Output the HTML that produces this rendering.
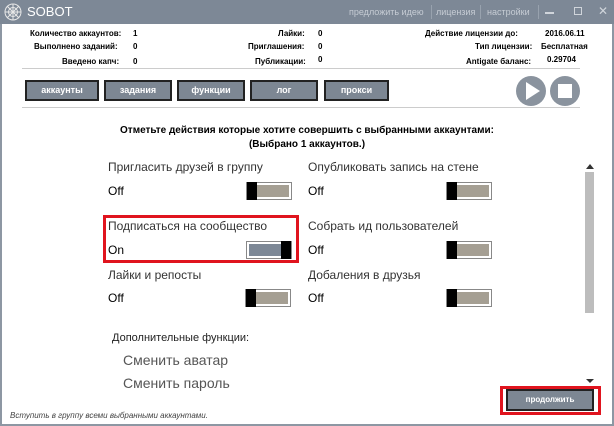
<!DOCTYPE html>
<html><head><meta charset="utf-8"><style>
*{margin:0;padding:0;box-sizing:border-box}
body{width:614px;height:426px;position:relative;background:#fff;font-family:"Liberation Sans","DejaVu Sans",sans-serif;overflow:hidden;color:#000}
.a{position:absolute;white-space:nowrap}
.s{font-size:8px;font-weight:bold}
.t{position:absolute;top:7px;color:#c6ccd4;font-size:9px;white-space:nowrap}
.sep{position:absolute;top:5px;width:1px;height:14px;background:#98a2ae}
.btn{position:absolute;top:80px;height:21px;background:#7d8793;border:2px solid #222;color:#fff;font-size:9px;font-weight:bold;text-align:center;line-height:17px}
.lbl{font-size:12px;color:#333}
.tg{position:absolute;width:46px;height:18px;background:#fff;border:1px solid #888}
.tg i{position:absolute;left:2px;top:2px;right:2px;bottom:2px;background:#a59f93}
.tg b{position:absolute;left:0;top:-1px;width:10px;height:18px;background:#000}
</style></head><body>
<div class="a" style="left:0;top:0;width:614px;height:426px;border:2px solid #8d97a3;border-top:none"></div>
<div class="a" style="left:0;top:0;width:614px;height:24px;background:#7d8896"></div>
<svg class="a" style="left:3px;top:2px" width="20" height="20" viewBox="0 0 20 20" fill="none" stroke="#e8e8e8" stroke-width="1"><circle cx="10" cy="10" r="8"/><circle cx="10" cy="10" r="4.5"/><path d="M2 10H18M10 2V18M4 4L16 16M16 4L4 16"/></svg>
<div class="a" style="left:27px;top:4px;color:#fff;font-size:13px">SOBOT</div>
<div class="t" style="left:349px">предложить идею</div>
<div class="sep" style="left:431px"></div>
<div class="t" style="left:436px">лицензия</div>
<div class="sep" style="left:480px"></div>
<div class="t" style="left:487px">настройки</div>
<div class="sep" style="left:538px"></div>
<div class="a" style="left:545px;top:12px;width:9px;height:2px;background:#d0d5db"></div>
<div class="a" style="left:574px;top:7px;width:8px;height:8px;border:1px solid #d0d5db"></div>
<div class="a" style="left:598px;top:4px;color:#d0d5db;font-size:12px">✕</div>

<div class="a s" style="left:30px;top:29px">Количество аккаунтов:</div><div class="a s" style="left:133px;top:29px">1</div>
<div class="a s" style="left:34px;top:42px">Выполнено заданий:</div><div class="a s" style="left:133px;top:42px">0</div>
<div class="a s" style="left:62px;top:57px">Введено капч:</div><div class="a s" style="left:133px;top:57px">0</div>
<div class="a s" style="left:278px;top:29px">Лайки:</div><div class="a s" style="left:318px;top:29px">0</div>
<div class="a s" style="left:248px;top:42px">Приглашения:</div><div class="a s" style="left:318px;top:42px">0</div>
<div class="a s" style="left:255px;top:57px">Публикации:</div><div class="a s" style="left:318px;top:55px">0</div>
<div class="a s" style="left:425px;top:29px">Действие лицензии до:</div><div class="a s" style="left:545px;top:29px">2016.06.11</div>
<div class="a s" style="left:475px;top:42px">Тип лицензии:</div><div class="a s" style="left:541px;top:42px">Бесплатная</div>
<div class="a s" style="left:466px;top:57px">Antigate баланс:</div><div class="a s" style="left:547px;top:55px">0.29704</div>
<div class="a" style="left:22px;top:68px;width:558px;height:1px;background:#ccc"></div>
<div class="btn" style="left:25px;width:74px">аккаунты</div>
<div class="btn" style="left:104px;width:68px">задания</div>
<div class="btn" style="left:177px;width:68px">функции</div>
<div class="btn" style="left:250px;width:68px">лог</div>
<div class="btn" style="left:324px;width:65px">прокси</div>
<div class="a" style="left:516px;top:76px;width:30px;height:30px;border-radius:50%;background:#8a939e"></div>
<div class="a" style="left:526px;top:82px;width:0;height:0;border-left:14px solid #fff;border-top:9px solid transparent;border-bottom:9px solid transparent"></div>
<div class="a" style="left:550px;top:76px;width:30px;height:30px;border-radius:50%;background:#8a939e"></div>
<div class="a" style="left:558px;top:84px;width:14px;height:14px;background:#fff"></div>
<div class="a" style="left:22px;top:107px;width:558px;height:1px;background:#ccc"></div>

<div class="a" style="left:0;top:124px;width:614px;text-align:center;font-size:10px;font-weight:bold;line-height:14px">Отметьте действия которые хотите совершить с выбранными аккаунтами:<br>(Выбрано 1 аккаунтов.)</div>

<div class="a lbl" style="left:108px;top:160px">Пригласить друзей в группу</div>
<div class="a" style="left:108px;top:184px;font-size:12px">Off</div>
<div class="tg" style="left:246px;top:182px"><i></i><b></b></div>
<div class="a lbl" style="left:308px;top:160px">Опубликовать запись на стене</div>
<div class="a" style="left:308px;top:184px;font-size:12px">Off</div>
<div class="tg" style="left:446px;top:182px"><i></i><b></b></div>

<div class="a" style="left:103px;top:215px;width:196px;height:48px;border:3px solid #e0141e"></div>
<div class="a lbl" style="left:108px;top:219px">Подписаться на сообщество</div>
<div class="a" style="left:108px;top:243px;font-size:12px">On</div>
<div class="tg" style="left:246px;top:241px"><i style="background:#7d8896"></i><b style="left:34px"></b></div>
<div class="a lbl" style="left:308px;top:219px">Собрать ид пользователей</div>
<div class="a" style="left:308px;top:243px;font-size:12px">Off</div>
<div class="tg" style="left:446px;top:241px"><i></i><b></b></div>

<div class="a lbl" style="left:108px;top:268px">Лайки и репосты</div>
<div class="a" style="left:108px;top:291px;font-size:12px">Off</div>
<div class="tg" style="left:245px;top:289px"><i></i><b></b></div>
<div class="a lbl" style="left:308px;top:268px">Добаления в друзья</div>
<div class="a" style="left:308px;top:291px;font-size:12px">Off</div>
<div class="tg" style="left:446px;top:289px"><i></i><b></b></div>

<div class="a" style="left:112px;top:332px;font-size:11px;color:#222">Дополнительные функции:</div>
<div class="a" style="left:123px;top:352px;font-size:14px;color:#555">Сменить аватар</div>
<div class="a" style="left:123px;top:375px;font-size:14px;color:#555">Сменить пароль</div>

<div class="a" style="left:586px;top:164px;width:0;height:0;border-left:4px solid transparent;border-right:4px solid transparent;border-bottom:5px solid #333"></div>
<div class="a" style="left:585px;top:172px;width:9px;height:141px;background:#bdbdbd"></div>
<div class="a" style="left:586px;top:379px;width:0;height:0;border-left:4px solid transparent;border-right:4px solid transparent;border-top:4px solid #333"></div>

<div class="a" style="left:500px;top:386px;width:101px;height:29px;border:3px solid #e0141e"></div>
<div class="a" style="left:506px;top:389px;width:88px;height:22px;background:#7d8793;border:2px solid #222;color:#fff;font-size:8px;font-weight:bold;text-align:center;line-height:18px">продолжить</div>
<div class="a" style="left:10px;top:411px;font-size:8px;font-style:italic;color:#444">Вступить в группу всеми выбранными аккаунтами.</div>
</body></html>
